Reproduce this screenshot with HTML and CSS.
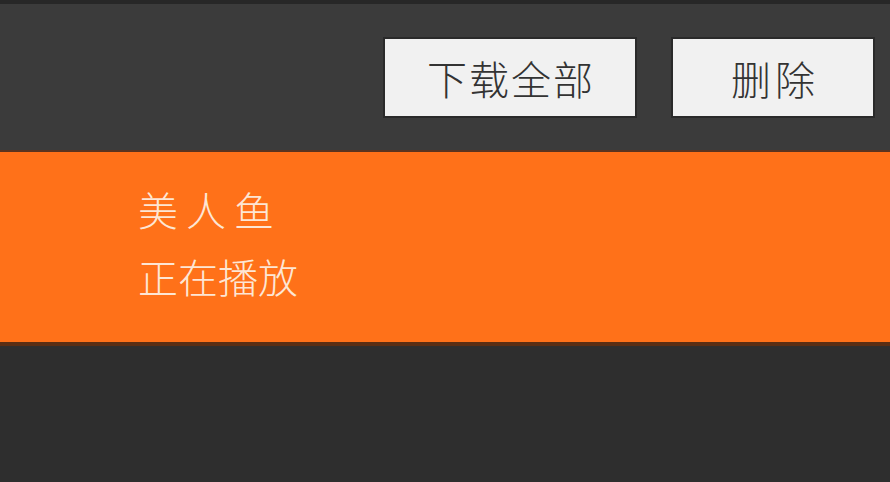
FILE: index.html
```html
<!DOCTYPE html>
<html lang="zh-CN">
<head>
<meta charset="utf-8">
<title>播放列表</title>
<link rel="stylesheet" href="styles.css">
</head>
<body>
<div class="app">
  <header class="toolbar">
    <button class="btn btn-wide">下载全部</button>
    <button class="btn btn-narrow">删除</button>
  </header>
  <section class="now-playing">
    <div class="title">美人鱼</div>
    <div class="status">正在播放</div>
  </section>
  <main class="rest"></main>
</div>
</body>
</html>
```
FILE: styles.css
```css
html, body {
  margin: 0;
  padding: 0;
  height: 100%;
  background: #2e2e2e;
}
body {
  font-family: "Noto Sans CJK SC", "Noto Sans", sans-serif;
}
.app {
  display: flex;
  flex-direction: column;
  height: 100%;
}
.toolbar {
  box-sizing: border-box;
  height: 152px;
  border-top: 4px solid #272727;
  border-bottom: 2px solid #5a3420;
  background: #3b3b3b;
  display: flex;
  justify-content: flex-end;
  align-items: flex-start;
  gap: 34px;
  padding: 33px 15px 0 0;
}
.btn {
  box-sizing: border-box;
  height: 81px;
  border: 2px solid #2a2a2a;
  background: #f1f1f1;
  color: #333333;
  font-family: "Noto Sans CJK SC", sans-serif;
  font-size: 40px;
  font-weight: 300;
  padding: 0;
  display: flex;
  align-items: center;
  justify-content: center;
  line-height: 1;
}
.btn-wide { width: 254px; letter-spacing: 2px; text-indent: 2px; }
.btn-narrow { width: 204px; letter-spacing: 4px; text-indent: 4px; }
.now-playing {
  height: 194px;
  box-sizing: border-box;
  background: #ff7119;
  border-bottom: 4px solid #5a2e14;
  padding: 24px 0 0 138px;
  color: #fde6d4;
  font-size: 40px;
  font-weight: 300;
  line-height: 67px;
}
.title { letter-spacing: 8px; }
.rest {
  flex: 1;
  background: #2e2e2e;
}
```
